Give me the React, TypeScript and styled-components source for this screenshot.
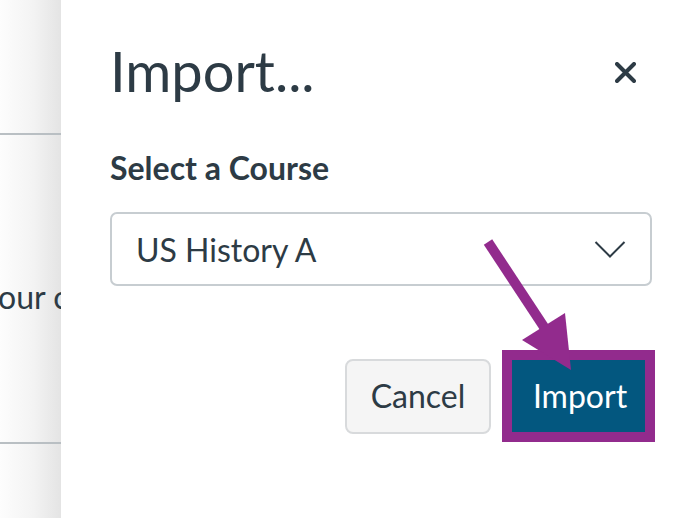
import React from "react";
import styled, { createGlobalStyle } from "styled-components";

const GlobalStyle = createGlobalStyle`
  html, body { margin: 0; padding: 0; background: #ffffff; }
  body { font-family: Lato, "Noto Sans", sans-serif; color: #2d3b45; }
  * { box-sizing: border-box; }
`;

const Screen = styled.div`
  position: relative;
  display: flex;
  width: 682px;
  height: 518px;
  overflow: hidden;
`;

const Backdrop = styled.div`
  width: 61px;
  flex-shrink: 0;
  overflow: hidden;
  display: flex;
  flex-direction: column;
  padding-top: 133px;
  background: linear-gradient(to right, #fdfdfd 0%, #f3f3f3 55%, #e4e4e4 100%);
`;

const Rule = styled.div<{ $gap: number }>`
  height: 2px;
  margin-top: ${(p) => p.$gap}px;
  background: #b9bfc3;
  flex-shrink: 0;
`;

const BackdropText = styled.div`
  margin-top: 143px;
  margin-left: -2px;
  font-size: 32px;
  line-height: 38px;
  white-space: nowrap;
  color: #2d3b45;
`;

const Panel = styled.div`
  flex: 1;
  background: #ffffff;
  display: flex;
  flex-direction: column;
  padding: 37px 30px 0 49px;
`;

const TitleRow = styled.div`
  display: flex;
  justify-content: space-between;
  align-items: center;
`;

const Title = styled.h2`
  margin: 0;
  font-size: 56px;
  line-height: 67px;
  font-weight: 400;
  color: #2d3b45;
`;

const CloseButton = styled.button`
  border: none;
  background: transparent;
  padding: 0;
  margin: 3px 16px 0 0;
  width: 21px;
  height: 21px;
  display: flex;
  align-items: center;
  justify-content: center;
  cursor: pointer;
`;

const Label = styled.div`
  margin-top: 45px;
  font-size: 32px;
  line-height: 38px;
  font-weight: 700;
  color: #2d3b45;
`;

const SelectBox = styled.div`
  margin-top: 25px;
  height: 74px;
  border: 2px solid #c7cdd1;
  border-radius: 7px;
  display: flex;
  align-items: center;
  justify-content: space-between;
  padding: 0 24px 0 24px;
  font-size: 32px;
  color: #2d3b45;
`;

const ButtonRow = styled.div`
  margin-top: 64px;
  margin-right: -3px;
  display: flex;
  justify-content: flex-end;
  align-items: center;
  gap: 11px;
`;

const Button = styled.button<{ $primary?: boolean }>`
  font-family: Lato, "Noto Sans", sans-serif;
  font-size: 32px;
  line-height: 38px;
  cursor: pointer;
  display: flex;
  align-items: center;
  justify-content: center;
  ${(p) =>
    p.$primary
      ? `
    width: 153px;
    height: 92px;
    padding: 0 0 0 3px;
    background: #03577f;
    color: #ffffff;
    border: 10px solid #922b8d;
    border-radius: 0;
  `
      : `
    width: 146px;
    height: 75px;
    background: #f5f5f5;
    color: #2d3b45;
    border: 2px solid #d8dadc;
    border-radius: 8px;
  `}
`;

const ArrowOverlay = styled.svg`
  position: absolute;
  left: 0;
  top: 0;
  pointer-events: none;
`;

export default function App() {
  return (
    <>
      <GlobalStyle />
      <Screen>
        <Backdrop>
          <Rule $gap={0} />
          <BackdropText>our course</BackdropText>
          <Rule $gap={126} />
        </Backdrop>
        <Panel>
          <TitleRow>
            <Title>Import...</Title>
            <CloseButton aria-label="Close">
              <svg width="21" height="21" viewBox="0 0 21 21">
                <path
                  d="M2 2 L19 19 M19 2 L2 19"
                  stroke="#2d3b45"
                  strokeWidth="4"
                  strokeLinecap="round"
                />
              </svg>
            </CloseButton>
          </TitleRow>
          <Label>Select a Course</Label>
          <SelectBox>
            <span>US History A</span>
            <svg width="32" height="19" viewBox="0 0 32 19">
              <polyline
                points="1.5,2 16,16.5 30.5,2"
                fill="none"
                stroke="#2d3b45"
                strokeWidth="2"
              />
            </svg>
          </SelectBox>
          <ButtonRow>
            <Button>Cancel</Button>
            <Button $primary>Import</Button>
          </ButtonRow>
        </Panel>
        <ArrowOverlay width="682" height="518" viewBox="0 0 682 518">
          <line
            x1="488"
            y1="242"
            x2="546"
            y2="330"
            stroke="#922b8d"
            strokeWidth="10"
          />
          <polygon points="522,340 565,313 571,370" fill="#922b8d" />
        </ArrowOverlay>
      </Screen>
    </>
  );
}
